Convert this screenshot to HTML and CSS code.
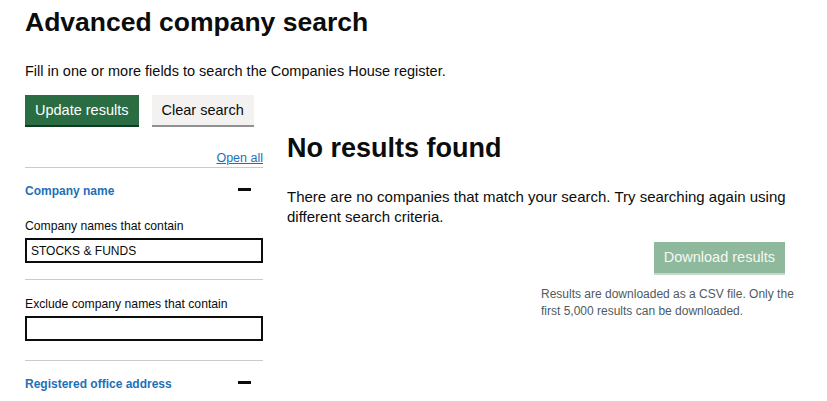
FILE: index.html
```html
<!DOCTYPE html>
<html lang="en">
<head>
<meta charset="utf-8">
<title>Advanced company search</title>
<link rel="stylesheet" href="styles.css">
</head>
<body>
<main class="page">
  <h1 class="title">Advanced company search</h1>
  <p class="intro">Fill in one or more fields to search the Companies House register.</p>
  <div class="actions">
    <button class="btn btn-primary" type="button">Update results</button>
    <button class="btn btn-secondary" type="button">Clear search</button>
  </div>
  <div class="layout">
    <aside class="filters">
      <div class="accordion-controls"><a class="open-all" href="#">Open all</a></div>
      <section class="acc-section">
        <div class="acc-header">
          <span class="acc-title">Company name</span>
          <span class="acc-icon"></span>
        </div>
        <div class="field field-first">
          <label class="label" for="inc">Company names that contain</label>
          <input class="input" id="inc" type="text" value="STOCKS &amp; FUNDS">
        </div>
        <div class="field field-last">
          <label class="label" for="exc">Exclude company names that contain</label>
          <input class="input" id="exc" type="text" value="">
        </div>
      </section>
      <section class="acc-section acc-section-last">
        <div class="acc-header">
          <span class="acc-title">Registered office address</span>
          <span class="acc-icon"></span>
        </div>
      </section>
    </aside>
    <section class="results">
      <h2 class="results-title">No results found</h2>
      <p class="results-text">There are no companies that match your search. Try searching again using different search criteria.</p>
      <div class="download">
        <button class="btn btn-download" type="button" disabled>Download results</button>
        <p class="hint">Results are downloaded as a CSV file. Only the first 5,000 results can be downloaded.</p>
      </div>
    </section>
  </div>
</main>
</body>
</html>
```

FILE: styles.css
```css
* { box-sizing: border-box; }
html, body { margin: 0; padding: 0; background: #fff; }
body {
  font-family: "Liberation Sans", Arial, sans-serif;
  color: #0b0c0c;
}
.page { padding: 6px 25px 0; }
.title {
  margin: 0;
  font-size: 26.5px;
  line-height: 32px;
  font-weight: 700;
}
.intro {
  margin: 23px 0 0;
  font-size: 14.5px;
  line-height: 20px;
}
.actions {
  display: flex;
  gap: 13px;
  margin-top: 14px;
}
.btn {
  font-family: inherit;
  font-size: 14.5px;
  line-height: 19px;
  padding: 6px 10px 5px;
  border: 0;
  border-radius: 0;
  cursor: pointer;
}
.btn-primary {
  background: #2b6d43;
  color: #fff;
  box-shadow: 0 2px 0 #0f3a22;
}
.btn-secondary {
  background: #f3f2f1;
  color: #0b0c0c;
  box-shadow: 0 2px 0 #929191;
}
.layout {
  display: grid;
  grid-template-columns: 238px 1fr;
  gap: 24px;
  margin-top: 7px;
}
.accordion-controls {
  display: flex;
  justify-content: flex-end;
  border-bottom: 1px solid #c8cacb;
  padding-top: 18px;
  padding-bottom: 1px;
}
.open-all {
  font-size: 12.5px;
  line-height: 16px;
  color: #1d70b8;
  text-decoration: underline;
}
.acc-section { border-bottom: 1px solid #c8cacb; }
.acc-section-last { border-bottom: 0; }
.acc-header {
  display: flex;
  justify-content: space-between;
  align-items: center;
  padding: 12px 12px 0 0;
  height: 33px;
}
.acc-title {
  font-size: 12px;
  line-height: 16px;
  font-weight: 700;
  color: #1d70b8;
}
.acc-icon {
  width: 13px;
  height: 3px;
  background: #0b0c0c;
  margin-top: -2px;
}
.field-first {
  padding: 17px 0 16px;
  border-bottom: 1px solid #c8cacb;
}
.field-last { padding: 16px 0 19px; }
.label {
  display: block;
  font-size: 12.2px;
  line-height: 16px;
  margin-bottom: 4px;
}
.input {
  display: block;
  width: 100%;
  height: 25px;
  border: 2px solid #0b0c0c;
  padding: 0 4px;
  font-family: inherit;
  font-size: 12px;
  color: #0b0c0c;
  border-radius: 0;
  background: #fff;
}
.results-title {
  margin: 0;
  font-size: 27px;
  line-height: 32px;
  font-weight: 700;
}
.results-text {
  margin: 23px 0 0;
  font-size: 15px;
  line-height: 20px;
  max-width: 510px;
}
.download {
  display: flex;
  flex-direction: column;
  align-items: flex-end;
  margin-top: 15px;
  padding-right: 17px;
}
.btn-download {
  background: #8fb99c;
  color: #f4f8f5;
  box-shadow: 0 2px 0 #c9d6cd;
  padding: 6px 10px 6px;
  cursor: default;
}
.hint {
  margin: 13px -13px 0 0;
  width: 257px;
  font-size: 12px;
  line-height: 17px;
  color: #505a5f;
}
```
